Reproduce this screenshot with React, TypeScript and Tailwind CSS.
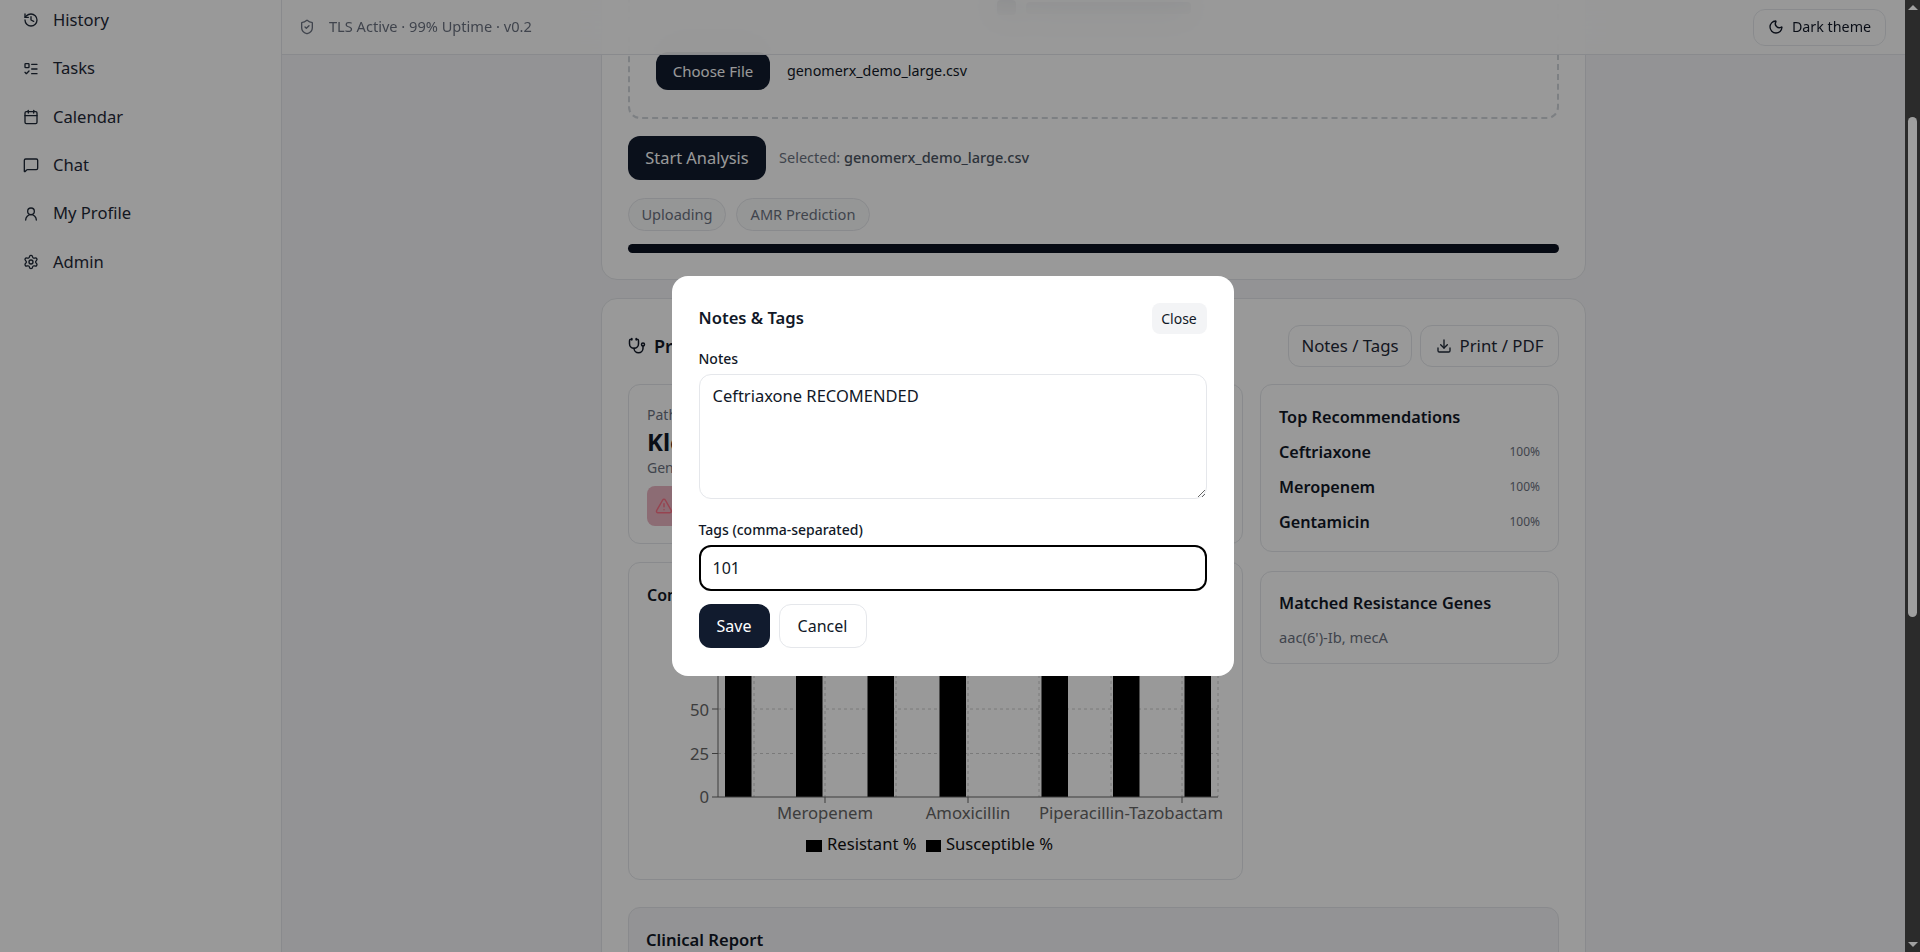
import React from 'react';
import { Calendar, Download, History, ListTodo, MessageSquare, Moon, Settings, ShieldCheck, Stethoscope, TriangleAlert, UserRound } from 'lucide-react';

const navItems = [
  { label: 'History', Icon: History },
  { label: 'Tasks', Icon: ListTodo },
  { label: 'Calendar', Icon: Calendar },
  { label: 'Chat', Icon: MessageSquare },
  { label: 'My Profile', Icon: UserRound },
  { label: 'Admin', Icon: Settings },
];

const recommendations = ['Ceftriaxone', 'Meropenem', 'Gentamicin'];

const bars = [725, 796, 867.5, 939.5, 1041.5, 1113, 1184.5];

// coordinates in the viewBox are page pixels, simpler to compare with the screenshot
const ResistanceChart = () => (
  <svg viewBox="647 612 590 250" width="590" height="250" className="block">
    {[621, 665, 709, 753.5].map((y) => (
      <line key={y} x1="718" x2="1218" y1={y} y2={y} stroke="#ccc" strokeDasharray="3 3" />
    ))}
    {[754, 825, 896, 968, 1039, 1111, 1182, 1218].map((x) => (
      <line key={x} x1={x} x2={x} y1="621" y2="797" stroke="#ccc" strokeDasharray="3 3" />
    ))}
    {bars.map((x) => (
      <rect key={x} x={x} y="621" width="26.5" height="176" fill="#000" />
    ))}
    <line x1="718" x2="718" y1="621" y2="797" stroke="#666" />
    <line x1="718" x2="1218" y1="797" y2="797" stroke="#666" />
    {[621, 665, 709, 753.5, 797].map((y) => (
      <line key={y} x1="712" x2="718" y1={y} y2={y} stroke="#666" />
    ))}
    {[825, 968, 1182].map((x) => (
      <line key={x} x1={x} x2={x} y1="797" y2="803" stroke="#666" />
    ))}
    <g fill="#666" fontSize="16.7">
      <text x="709" y="627" textAnchor="end">100</text>
      <text x="709" y="671" textAnchor="end">75</text>
      <text x="709" y="716" textAnchor="end">50</text>
      <text x="709" y="760" textAnchor="end">25</text>
      <text x="709" y="803" textAnchor="end">0</text>
      <text x="825" y="819" textAnchor="middle">Meropenem</text>
      <text x="968" y="819" textAnchor="middle">Amoxicillin</text>
      <text x="1223" y="819" textAnchor="end">Piperacillin-Tazobactam</text>
    </g>
    <rect x="806" y="840" width="16" height="12" fill="#000" />
    <rect x="926" y="840" width="15" height="12" fill="#000" />
    <g fill="#111" fontSize="16.6">
      <text x="827" y="850">Resistant %</text>
      <text x="946" y="850">Susceptible %</text>
    </g>
  </svg>
);

const NotesModal = () => (
  <div className="absolute inset-0 z-20 flex items-center justify-center bg-black/40">
    <div className="w-[562px] rounded-2xl bg-white px-[27px] pt-[27px] pb-[28px]">
      <div className="flex h-[31px] items-center justify-between">
        <h3 className="text-[16.6px] font-semibold text-[#111827]">Notes &amp; Tags</h3>
        <button className="h-[31px] w-[55px] rounded-lg bg-[#f3f4f6] text-sm text-[#111827]">Close</button>
      </div>
      <label className="mt-[15px] mb-[5px] block text-sm leading-5 font-medium text-[#111827]">Notes</label>
      <textarea
        readOnly
        defaultValue="Ceftriaxone RECOMENDED"
        className="block h-[125px] w-full rounded-xl border border-[#e5e7eb] px-[13px] py-[9px] text-[16.5px] text-[#111827] outline-none"
      />
      <label className="mt-[21px] mb-[5px] block text-sm leading-5 font-medium text-[#111827]">Tags (comma-separated)</label>
      <input
        readOnly
        defaultValue="101"
        className="block h-[46px] w-full rounded-xl border-2 border-black px-[12px] text-base text-[#111827] outline-none"
      />
      <div className="mt-[13px] flex gap-[9px]">
        <button className="h-[44px] w-[71px] rounded-xl bg-[#111b2e] text-base text-white">Save</button>
        <button className="h-[44px] w-[88px] rounded-xl border border-[#e5e7eb] bg-white text-base text-[#111827]">Cancel</button>
      </div>
    </div>
  </div>
);

export default function App() {
  return (
    <div className="flex h-[952px] w-[1920px] overflow-hidden font-['Noto_Sans',sans-serif]">
      <div className="relative flex min-w-0 flex-1 overflow-hidden bg-[#f5f6f8]">
        <aside className="w-[282px] shrink-0 border-r border-[#e5e7eb] bg-white">
          <nav className="-mt-[4px] flex flex-col pl-[23px]">
            {navItems.map(({ label, Icon }) => (
              <div key={label} className="flex h-[48.4px] items-center gap-[14px] text-[16.6px] text-[#1f2937]">
                <Icon size={16} strokeWidth={2} />
                {label}
              </div>
            ))}
          </nav>
        </aside>

        <main className="relative min-w-0 flex-1">
          <header className="absolute inset-x-0 top-0 z-10 flex h-[55px] items-center justify-between border-b border-[#e5e7eb] bg-white/85 pr-[19px] pl-[17px] backdrop-blur-lg">
            <div className="flex items-center gap-[14px] text-[14.6px] text-[#6b7280]">
              <ShieldCheck size={16} />
              TLS Active · 99% Uptime · v0.2
            </div>
            <button className="flex h-[37px] w-[133px] items-center justify-center gap-[8px] rounded-xl border border-[#e5e7eb] text-[14.3px] text-[#111827]">
              <Moon size={16} />
              Dark theme
            </button>
          </header>

          <div className="-mt-[121px] ml-[319px] flex w-[985px] flex-col gap-[18px]">
            <section className="rounded-2xl border border-[#e5e7eb] bg-white px-[26px] pt-[27px] pb-[26px]">
              <div className="h-[212px] rounded-xl border-2 border-dashed border-[#d1d5db] px-[26px]">
                <div className="flex h-[143px] items-start justify-center gap-[10px] pt-[91px]">
                  <div className="h-[15px] w-[19px] rounded bg-[#6b7280]" />
                  <div className="mt-[2px] h-[12px] w-[165px] rounded bg-[#9ca3af]" />
                </div>
                <div className="flex items-center gap-[17px] text-[14.3px] text-[#111827]">
                  <button className="h-[38px] w-[114px] rounded-xl bg-[#111b2e] text-[15px] text-white">Choose File</button>
                  genomerx_demo_large.csv
                </div>
              </div>
              <div className="mt-[17px] flex items-center gap-[13px]">
                <button className="h-[44px] w-[138px] rounded-xl bg-[#111b2e] text-[16.4px] text-white">Start Analysis</button>
                <span className="text-[14.5px] text-[#6b7280]">
                  Selected: <span className="font-medium text-[#4b5563]">genomerx_demo_large.csv</span>
                </span>
              </div>
              <div className="mt-[18px] flex gap-[10px] text-[14.6px] text-[#6b7280]">
                <span className="flex h-[33px] w-[98px] items-center justify-center rounded-full border border-[#e5e7eb] bg-[#f9fafb]">Uploading</span>
                <span className="flex h-[33px] w-[134px] items-center justify-center rounded-full border border-[#e5e7eb] bg-[#f9fafb]">AMR Prediction</span>
              </div>
              <div className="mt-[13px] h-[9px] rounded-full bg-[#0b1120]" />
            </section>

            <section className="rounded-2xl border border-[#e5e7eb] bg-white px-[26px] pt-[26px]">
              <div className="flex h-[42px] items-center justify-between">
                <h2 className="flex items-center gap-[8px] text-lg font-semibold text-[#111827]">
                  <Stethoscope size={18} />
                  Prediction Results
                </h2>
                <div className="flex gap-[8px] text-[16.8px] text-[#1f2937]">
                  <button className="h-[42px] w-[124px] rounded-xl border border-[#e5e7eb]">Notes / Tags</button>
                  <button className="flex h-[42px] w-[139px] items-center justify-center gap-[8px] rounded-xl border border-[#e5e7eb]">
                    <Download size={16} />
                    Print / PDF
                  </button>
                </div>
              </div>

              <div className="mt-[17px] flex gap-[17px]">
                <div className="flex w-[615px] shrink-0 flex-col gap-[18px]">
                  <div className="h-[160px] rounded-xl border border-[#e5e7eb] px-[18px] pt-[20px]">
                    <p className="text-sm leading-5 text-[#6b7280]">Pathogen</p>
                    <p className="text-2xl leading-[33px] font-bold text-[#111827]">Klebsiella pneumoniae</p>
                    <p className="text-sm leading-5 text-[#6b7280]">Genes detected</p>
                    <div className="mt-[8px] flex h-[40px] w-[200px] items-center rounded-lg bg-[#eab4c2] px-[8px] text-[#fb7185]">
                      <TriangleAlert size={18} />
                    </div>
                  </div>
                  <div className="h-[318px] rounded-xl border border-[#e5e7eb] pt-[22px] pl-[18px]">
                    <p className="mb-[7px] text-base leading-5 font-semibold text-[#111827]">Comparison</p>
                    <ResistanceChart />
                  </div>
                </div>

                <div className="flex flex-1 flex-col gap-[19px]">
                  <div className="h-[168px] rounded-xl border border-[#e5e7eb] px-[18px] pt-[20px]">
                    <p className="text-[16.3px] leading-6 font-semibold text-[#111827]">Top Recommendations</p>
                    <div className="mt-[11px] flex flex-col gap-[11px]">
                      {recommendations.map((name) => (
                        <div key={name} className="flex h-[24px] items-center justify-between">
                          <span className="text-[16.2px] font-semibold text-[#111827]">{name}</span>
                          <span className="text-xs text-[#6b7280]">100%</span>
                        </div>
                      ))}
                    </div>
                  </div>
                  <div className="h-[93px] rounded-xl border border-[#e5e7eb] px-[18px] pt-[19px]">
                    <p className="text-[16.3px] leading-6 font-semibold text-[#111827]">Matched Resistance Genes</p>
                    <p className="mt-[12px] text-[14.7px] leading-5 text-[#6b7280]">aac(6')-Ib, mecA</p>
                  </div>
                </div>
              </div>

              <div className="mt-[27px] h-[120px] rounded-xl border border-[#e5e7eb] bg-[#f5f6f8] px-[17px] pt-[20px]">
                <p className="text-[16.6px] leading-6 font-semibold text-[#111827]">Clinical Report</p>
              </div>
            </section>
          </div>
        </main>

        <NotesModal />
      </div>

      {/* the browser's scrollbar stays undimmed above the page */}
      <div className="relative w-[15px] shrink-0 bg-[#2b2b2b]">
        <div className="mx-auto mt-[5px] h-0 w-0 border-x-[5px] border-b-[5px] border-x-transparent border-b-[#a0a0a0]" />
        <div className="mx-auto mt-[107px] h-[500px] w-[9px] rounded-full bg-[#9f9f9f]" />
        <div className="absolute bottom-[5px] left-[2.5px] h-0 w-0 border-x-[5px] border-t-[5px] border-x-transparent border-t-[#a0a0a0]" />
      </div>
    </div>
  );
}
